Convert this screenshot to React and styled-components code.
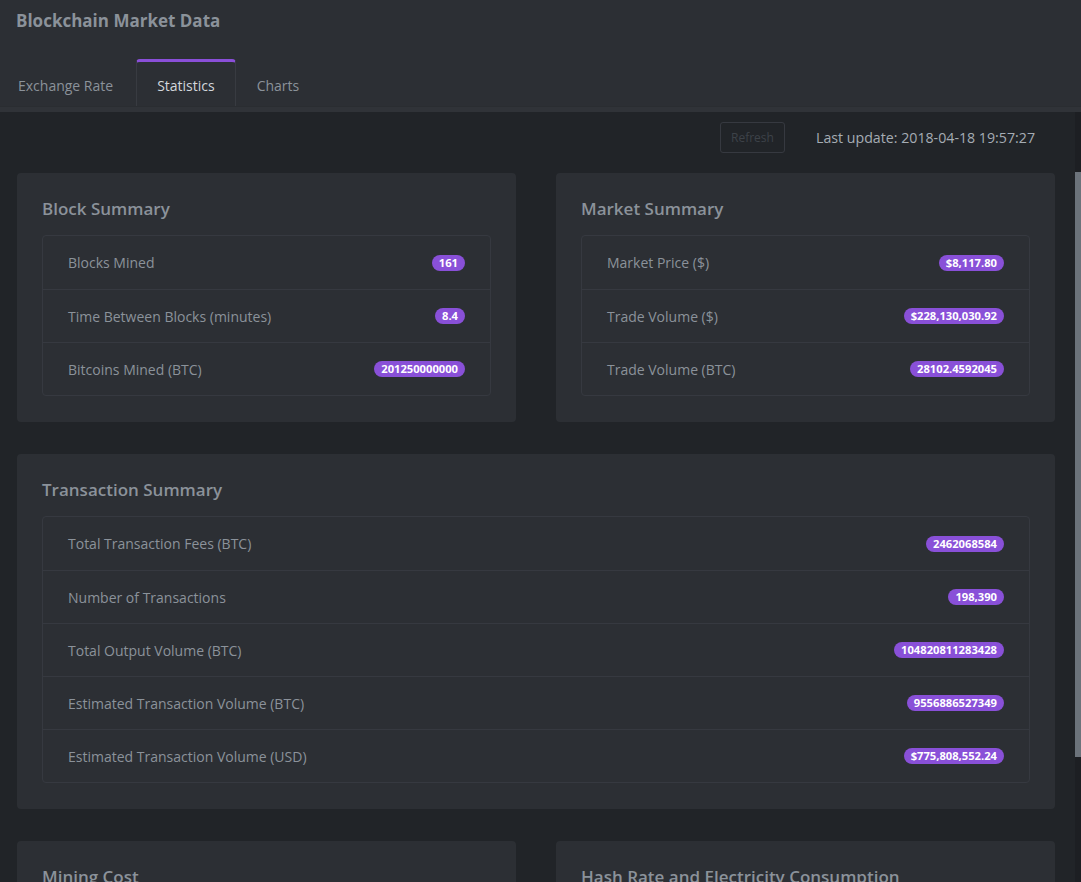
import React from "react";
import styled, { createGlobalStyle } from "styled-components";

const Global = createGlobalStyle`
  html, body { margin: 0; padding: 0; height: 100%; overflow: hidden; background: #212428; }
  body { font-family: "Open Sans", "Noto Sans", sans-serif; }
  * { box-sizing: border-box; }
`;

const Page = styled.div`
  height: 100vh;
  display: flex;
  flex-direction: column;
  overflow: hidden;
`;

const Header = styled.header`
  background: #2c2f34;
  padding-top: 8px;
`;

const Title = styled.h1`
  margin: 0 0 26px 16px;
  font-size: 17px;
  line-height: 25px;
  font-weight: 700;
  color: #8b929a;
`;

const TabBar = styled.nav`
  display: flex;
  height: 47px;
  margin-left: -3px;
`;

const Tab = styled.div`
  display: flex;
  align-items: center;
  padding: 3px ${(p) => (p.$first ? "22px" : "20px")} 0 20px;
  font-size: 14px;
  color: ${(p) => (p.$active ? "#d3d7dc" : "#8b929a")};
  border-left: 1px solid ${(p) => (p.$active ? "#383b41" : "transparent")};
  border-right: 1px solid ${(p) => (p.$active ? "#383b41" : "transparent")};
  border-top: 3px solid ${(p) => (p.$active ? "#8a4fd8" : "transparent")};
  border-radius: 4px 4px 0 0;
`;

const Strip = styled.div`
  height: 6px;
  background: #303338;
  border-top: 1px solid #2a2d31;
`;

const Body = styled.div`
  flex: 1;
  display: flex;
  min-height: 0;
`;

const Content = styled.main`
  flex: 1;
  padding: 10px 20px 0 17px;
  display: flex;
  flex-direction: column;
  gap: 32px;
`;

const Toolbar = styled.div`
  display: flex;
  justify-content: flex-end;
  align-items: center;
  gap: 31px;
  padding-right: 20px;
  margin-bottom: -12px;
`;

const RefreshButton = styled.button`
  height: 31px;
  width: 65px;
  background: transparent;
  border: 1px solid #363940;
  border-radius: 3px;
  color: #3d4248;
  font-family: inherit;
  font-size: 12px;
  padding: 0;
`;

const UpdateText = styled.span`
  font-size: 14.2px;
  color: #a5acb4;
`;

const Row2 = styled.div`
  display: grid;
  grid-template-columns: 1fr 1fr;
  gap: 40px;
`;

const Card = styled.section`
  background: #2c2f34;
  border-radius: 4px;
  padding: 25px 25px 26px;
`;

const CardTitle = styled.h2`
  margin: 0 0 15px;
  font-size: 17px;
  line-height: 22px;
  font-weight: 600;
  color: #8b929a;
`;

const List = styled.ul`
  list-style: none;
  margin: 0;
  padding: 0;
  border: 1px solid #363940;
  border-radius: 4px;
`;

const Item = styled.li`
  display: flex;
  justify-content: space-between;
  align-items: center;
  height: 53px;
  padding: 0 25px;
  font-size: 14px;
  color: #8b929a;
  & + & { border-top: 1px solid #363940; }
`;

const Badge = styled.span`
  background: #8950d8;
  color: #fff;
  font-weight: 700;
  font-size: 11.2px;
  line-height: 16px;
  height: 16px;
  padding: 0 7px;
  border-radius: 8px;
`;

const Track = styled.div`
  width: 6px;
  background: #1d1f23;
  display: flex;
  flex-direction: column;
`;

const Thumb = styled.div`
  margin-top: 60px;
  height: 585px;
  background: #6c737b;
`;

const block = [
  ["Blocks Mined", "161"],
  ["Time Between Blocks (minutes)", "8.4"],
  ["Bitcoins Mined (BTC)", "201250000000"],
];
const market = [
  ["Market Price ($)", "$8,117.80"],
  ["Trade Volume ($)", "$228,130,030.92"],
  ["Trade Volume (BTC)", "28102.4592045"],
];
const tx = [
  ["Total Transaction Fees (BTC)", "2462068584"],
  ["Number of Transactions", "198,390"],
  ["Total Output Volume (BTC)", "104820811283428"],
  ["Estimated Transaction Volume (BTC)", "9556886527349"],
  ["Estimated Transaction Volume (USD)", "$775,808,552.24"],
];

const Summary = ({ title, rows }) => (
  <Card>
    <CardTitle>{title}</CardTitle>
    {rows && (
      <List>
        {rows.map(([k, v]) => (
          <Item key={k}>
            <span>{k}</span>
            <Badge>{v}</Badge>
          </Item>
        ))}
      </List>
    )}
  </Card>
);

export default function App() {
  return (
    <Page>
      <Global />
      <Header>
        <Title>Blockchain Market Data</Title>
        <TabBar>
          <Tab $first>Exchange Rate</Tab>
          <Tab $active>Statistics</Tab>
          <Tab>Charts</Tab>
        </TabBar>
      </Header>
      <Strip />
      <Body>
        <Content>
          <Toolbar>
            <RefreshButton disabled>Refresh</RefreshButton>
            <UpdateText>Last update: 2018-04-18 19:57:27</UpdateText>
          </Toolbar>
          <Row2>
            <Summary title="Block Summary" rows={block} />
            <Summary title="Market Summary" rows={market} />
          </Row2>
          <Summary title="Transaction Summary" rows={tx} />
          <Row2>
            <Summary title="Mining Cost" />
            <Summary title="Hash Rate and Electricity Consumption" />
          </Row2>
        </Content>
        <Track>
          <Thumb />
        </Track>
      </Body>
    </Page>
  );
}
